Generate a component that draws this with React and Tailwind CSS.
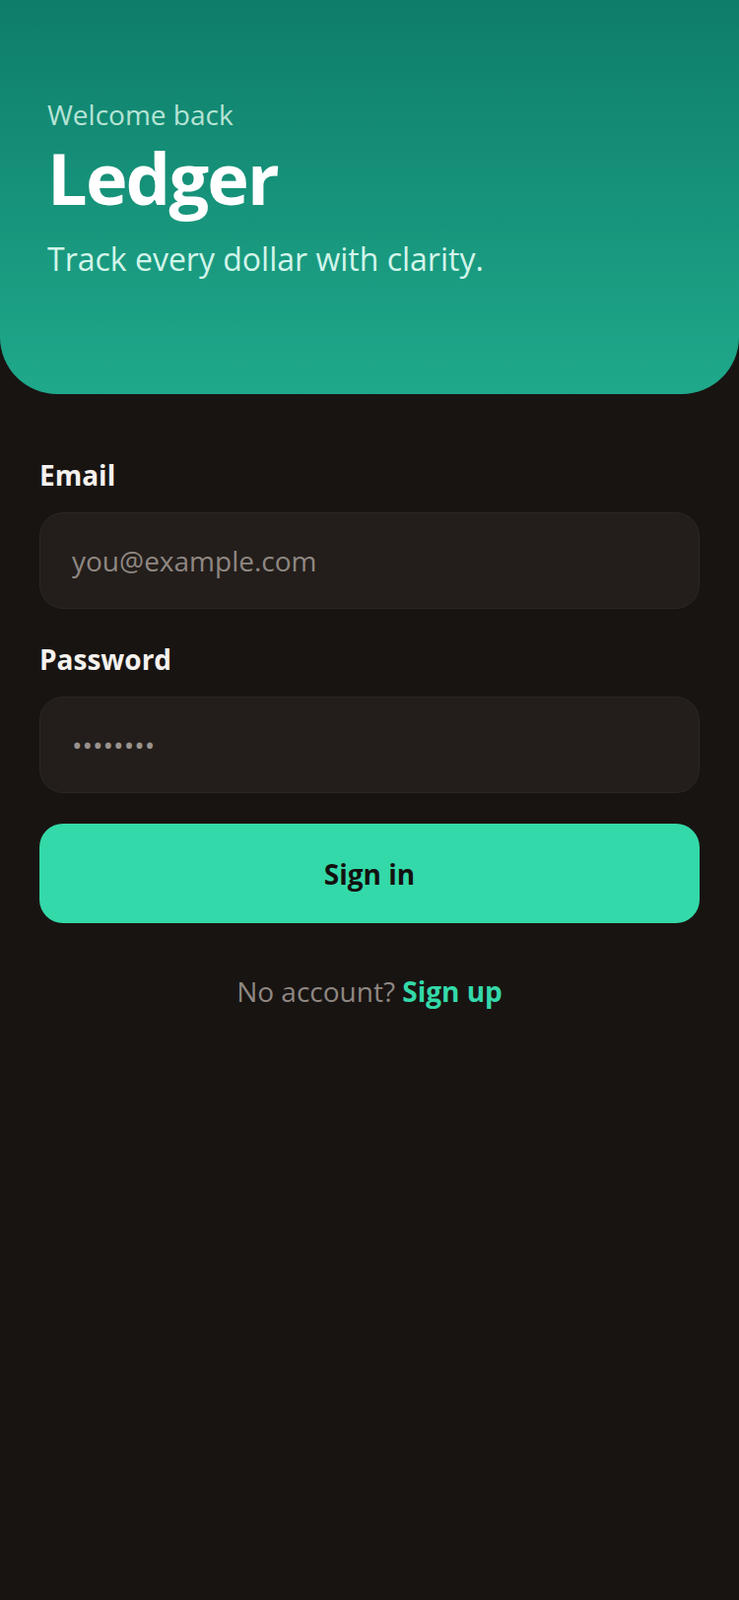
import { useState } from "react";

export default function App() {
  const [email, setEmail] = useState("");
  const [password, setPassword] = useState("password");

  return (
    <div className="min-h-[1624px] w-full bg-[#181412] font-['Open_Sans','Noto_Sans',sans-serif]">
      <header className="h-[400px] rounded-b-[58px] bg-gradient-to-b from-[#0e7d6a] to-[#1fa98b] px-[48px] pt-[95px]">
        <p className="text-[28px] leading-[42px] text-[#b6e4d6]">Welcome back</p>
        <h1 className="mt-[7px] text-[72px] font-bold leading-[72px] tracking-tight text-white">
          Ledger
        </h1>
        <p className="mt-[23px] text-[32px] leading-[48px] text-[#d2f5ea]">
          Track every dollar with clarity.
        </p>
      </header>

      <form
        className="px-[40px] pt-[61px]"
        onSubmit={(e) => e.preventDefault()}
      >
        <label className="block text-[28px] font-bold leading-[42px] text-[#f5f1ee]">
          Email
        </label>
        <input
          type="email"
          value={email}
          onChange={(e) => setEmail(e.target.value)}
          placeholder="you@example.com"
          className="mt-[17px] block h-[98px] w-full rounded-[24px] border border-[#2b2623] bg-[#231e1b] pl-[32px] text-[28px] text-[#f5f1ee] outline-none placeholder:text-[#8f8782]"
        />

        <label className="mt-[30px] block text-[28px] font-bold leading-[42px] text-[#f5f1ee]">
          Password
        </label>
        <input
          type="password"
          value={password}
          onChange={(e) => setPassword(e.target.value)}
          className="mt-[17px] block h-[98px] w-full rounded-[24px] border border-[#2b2623] bg-[#231e1b] pl-[32px] text-[28px] text-[#9a928d] outline-none"
        />

        <button
          type="submit"
          className="mt-[31px] block h-[101px] w-full rounded-[24px] bg-[#34d9a9] text-[28px] font-bold text-[#13110f]"
        >
          Sign in
        </button>

        <p className="mt-[48px] text-center text-[28px] leading-[42px] text-[#8f8782]">
          No account? <span className="font-bold text-[#34d9a9]">Sign up</span>
        </p>
      </form>
    </div>
  );
}
